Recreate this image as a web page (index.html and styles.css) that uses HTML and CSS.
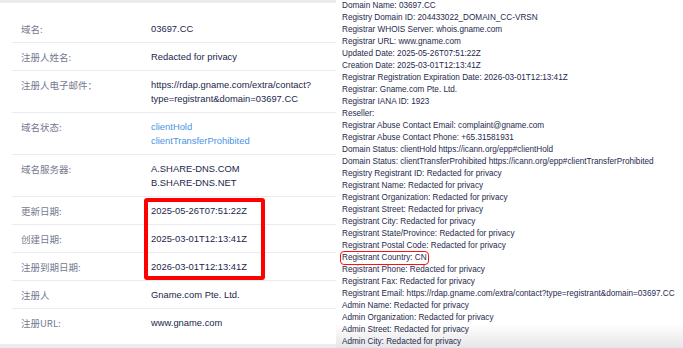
FILE: index.html
```html
<!DOCTYPE html>
<html lang="zh">
<head>
<meta charset="utf-8">
<link rel="stylesheet" href="styles.css">
</head>
<body>
<div class="page">
  <section class="info">
    <div class="row"><div class="label">域名:</div><div class="value">03697.CC</div></div>
    <div class="row"><div class="label">注册人姓名:</div><div class="value">Redacted for privacy</div></div>
    <div class="row"><div class="label">注册人电子邮件：</div><div class="value">https://rdap.gname.com/extra/contact?<br>type=registrant&amp;domain=03697.CC</div></div>
    <div class="row"><div class="label">域名状态:</div><div class="value link">clientHold<br>clientTransferProhibited</div></div>
    <div class="row"><div class="label">域名服务器:</div><div class="value">A.SHARE-DNS.COM<br>B.SHARE-DNS.NET</div></div>
    <div class="row"><div class="label">更新日期:</div><div class="value">2025-05-26T07:51:22Z</div></div>
    <div class="row"><div class="label">创建日期:</div><div class="value">2025-03-01T12:13:41Z</div></div>
    <div class="row"><div class="label">注册到期日期:</div><div class="value">2026-03-01T12:13:41Z</div></div>
    <div class="row"><div class="label">注册人</div><div class="value">Gname.com Pte. Ltd.</div></div>
    <div class="row last"><div class="label">注册URL:</div><div class="value">www.gname.com</div></div>
    <div class="highlight-box"></div>
  </section>
  <section class="raw">
    <div class="line">Domain Name: 03697.CC</div>
    <div class="line">Registry Domain ID: 204433022_DOMAIN_CC-VRSN</div>
    <div class="line">Registrar WHOIS Server: whois.gname.com</div>
    <div class="line">Registrar URL: www.gname.com</div>
    <div class="line">Updated Date: 2025-05-26T07:51:22Z</div>
    <div class="line">Creation Date: 2025-03-01T12:13:41Z</div>
    <div class="line">Registrar Registration Expiration Date: 2026-03-01T12:13:41Z</div>
    <div class="line">Registrar: Gname.com Pte. Ltd.</div>
    <div class="line">Registrar IANA ID: 1923</div>
    <div class="line">Reseller:</div>
    <div class="line">Registrar Abuse Contact Email: complaint@gname.com</div>
    <div class="line">Registrar Abuse Contact Phone: +65.31581931</div>
    <div class="line">Domain Status: clientHold https://icann.org/epp#clientHold</div>
    <div class="line">Domain Status: clientTransferProhibited https://icann.org/epp#clientTransferProhibited</div>
    <div class="line">Registry Registrant ID: Redacted for privacy</div>
    <div class="line">Registrant Name: Redacted for privacy</div>
    <div class="line">Registrant Organization: Redacted for privacy</div>
    <div class="line">Registrant Street: Redacted for privacy</div>
    <div class="line">Registrant City: Redacted for privacy</div>
    <div class="line">Registrant State/Province: Redacted for privacy</div>
    <div class="line">Registrant Postal Code: Redacted for privacy</div>
    <div class="line"><span class="mark">Registrant Country: CN</span></div>
    <div class="line">Registrant Phone: Redacted for privacy</div>
    <div class="line">Registrant Fax: Redacted for privacy</div>
    <div class="line">Registrant Email: https://rdap.gname.com/extra/contact?type=registrant&amp;domain=03697.CC</div>
    <div class="line">Admin Name: Redacted for privacy</div>
    <div class="line">Admin Organization: Redacted for privacy</div>
    <div class="line">Admin Street: Redacted for privacy</div>
    <div class="line">Admin City: Redacted for privacy</div>
  </section>
</div>
</body>
</html>
```

FILE: styles.css
```css
html, body {
  margin: 0;
  padding: 0;
}
body {
  width: 683px;
  height: 348px;
  overflow: hidden;
  background: #ececee;
  font-family: "Liberation Sans", Arial, "Noto Sans CJK SC", sans-serif;
}
.page {
  display: flex;
  align-items: flex-start;
  height: 348px;
}
.info {
  position: relative;
  width: 336px;
  height: 341px;
  margin-top: 3px;
  box-sizing: border-box;
  background: #ffffff;
  padding: 12px 0 0 12px;
}
.row {
  display: flex;
  padding: 7px 0 6px 9px;
  border-bottom: 1px solid #e9ebf0;
  line-height: 14px;
  font-size: 9.4px;
}
.row.last {
  border-bottom: none;
}
.label {
  width: 130px;
  flex: none;
  color: #767a90;
  font-family: "Noto Sans CJK SC", "Liberation Sans", sans-serif;
  font-size: 9.5px;
}
.value {
  color: #23264a;
}
.value.link {
  color: #4a94e4;
}
.highlight-box {
  position: absolute;
  left: 144px;
  top: 195px;
  width: 121px;
  height: 82px;
  box-sizing: border-box;
  border: 4px solid #ff0000;
  border-radius: 3px;
}
.raw {
  flex: 1;
  height: 348px;
  background: linear-gradient(to bottom, #ffffff 0, #ffffff 324px, #e6e6e8 348px);
  padding: 0 0 0 6px;
  box-sizing: border-box;
  font-size: 8.2px;
  line-height: 12px;
  color: #262a4c;
  white-space: nowrap;
  overflow: hidden;
}
.line {
  height: 12px;
}
.mark {
  display: inline-block;
  outline: 1.5px solid #ff1010;
  outline-offset: 1px;
  border-radius: 2px;
  line-height: 10px;
}
```
